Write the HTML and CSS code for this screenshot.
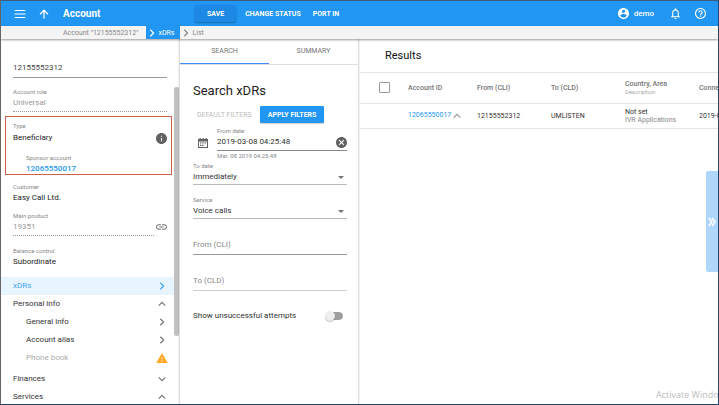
FILE: index.html
```html
<!DOCTYPE html>
<html lang="en">
<head>
<meta charset="utf-8">
<meta name="viewport" content="width=device-width, initial-scale=1">
<title>Account – xDRs</title>
<link rel="stylesheet" href="styles.css">
</head>
<body>
<svg class="sprite" aria-hidden="true">
  <symbol id="chevron" viewBox="0 0 8 8"><path d="M2.3 .8 5.6 4 2.3 7.2" fill="none" stroke="currentColor" stroke-width="1.2"/></symbol>
</svg>
<div class="app">
  <header class="topbar">
    <div class="topbar-nav">
      <button class="icon-button" aria-label="Menu"><svg class="icon-menu" viewBox="0 0 12 10"><path d="M0.500 1.500h11M.5 5h11M.5 8.500h11" stroke="currentColor" stroke-width="1.200"/></svg></button>
      <button class="icon-button" aria-label="Up"><svg class="icon-up" viewBox="0 0 10 10"><path d="M5 9.500V1.200M1 5.200l4-4 4 4" fill="none" stroke="currentColor" stroke-width="1.300"/></svg></button>
      <h1 class="title">Account</h1>
    </div>
    <div class="topbar-actions">
      <button class="action save">SAVE</button>
      <button class="action">CHANGE STATUS</button>
      <button class="action">PORT IN</button>
    </div>
    <div class="topbar-user">
      <button class="user"><svg class="icon-round" viewBox="2 2 20 20"><path fill="currentColor" d="M12 2C6.480 2 2 6.480 2 12s4.480 10 10 10 10-4.480 10-10S17.520 2 12 2zm0 3c1.660 0 3 1.340 3 3s-1.340 3-3 3-3-1.340-3-3 1.340-3 3-3zm0 14.200c-2.500 0-4.710-1.280-6-3.220.03-1.990 4-3.080 6-3.080 1.990 0 5.970 1.090 6 3.080-1.290 1.940-3.500 3.220-6 3.220z"/></svg>demo</button>
      <button class="icon-button" aria-label="Notifications"><svg class="icon-bell" viewBox="4 2 16 20"><path fill="currentColor" d="M12 22c1.100 0 2-.9 2-2h-4c0 1.100.9 2 2 2zm6-6v-5c0-3.070-1.630-5.640-4.500-6.320V4c0-.83-.67-1.500-1.500-1.500s-1.500.67-1.500 1.500v.68C7.640 5.360 6 7.920 6 11v5l-2 2v1h16v-1l-2-2zm-2 1H8v-6c0-2.480 1.510-4.500 4-4.500s4 2.020 4 4.500v6z"/></svg></button>
      <button class="icon-button" aria-label="Help"><svg class="icon-round" viewBox="2 2 20 20"><path fill="currentColor" d="M11 18h2v-2h-2v2zm1-16C6.480 2 2 6.480 2 12s4.480 10 10 10 10-4.480 10-10S17.520 2 12 2zm0 18c-4.410 0-8-3.590-8-8s3.590-8 8-8 8 3.590 8 8-3.590 8-8 8zm0-14c-2.210 0-4 1.790-4 4h2c0-1.100.9-2 2-2s2 .9 2 2c0 2-3 1.750-3 5h2c0-2.250 3-2.500 3-5 0-2.210-1.790-4-4-4z"/></svg></button>
    </div>
  </header>

  <nav class="crumbs" aria-label="Breadcrumb">
    <a class="crumb first" href="#account">Account "12155552312"</a>
    <a class="crumb current" href="#xdrs"><svg class="crumb-arrow"><use href="#chevron"/></svg>xDRs</a>
    <a class="crumb" href="#list"><svg class="crumb-arrow"><use href="#chevron"/></svg>List</a>
  </nav>

  <main class="content">
    <aside class="sidebar">
      <div class="side-scroll">
        <div class="details">
          <input class="line-input account-id" aria-label="Account ID" value="12155552312">
          <div class="field dashed role">
            <label class="label" for="role">Account role</label>
            <input class="value muted" id="role" value="Universal" disabled>
          </div>
        </div>
        <section class="type-box">
          <div class="label">Type</div>
          <div class="type-row"><span>Beneficiary</span><svg class="icon-info" viewBox="2 2 20 20"><path fill="currentColor" d="M12 2C6.480 2 2 6.480 2 12s4.480 10 10 10 10-4.480 10-10S17.520 2 12 2zm1 15h-2v-6h2v6zm0-8h-2V7h2v2z"/></svg></div>
          <div class="sponsor">
            <div class="label">Sponsor account</div>
            <a class="link" href="#sponsor">12065550017</a>
          </div>
        </section>
        <div class="details after">
          <div class="field"><div class="label">Customer</div><div class="value">Easy Call Ltd.</div></div>
          <div class="product">
            <div class="field dashed">
              <label class="label" for="product">Main product</label>
              <input class="value muted" id="product" value="19351" disabled>
            </div>
            <svg class="icon-link" viewBox="2 7 20 10"><path fill="currentColor" d="M3.900 12c0-1.710 1.390-3.100 3.100-3.100h4V7H7c-2.760 0-5 2.240-5 5s2.240 5 5 5h4v-1.900H7c-1.710 0-3.100-1.390-3.100-3.100zM8 13h8v-2H8v2zm9-6h-4v1.900h4c1.710 0 3.100 1.390 3.100 3.100s-1.390 3.100-3.100 3.100h-4V17h4c2.760 0 5-2.240 5-5s-2.240-5-5-5z"/></svg>
          </div>
          <div class="field"><div class="label">Balance control</div><div class="value">Subordinate</div></div>
        </div>
        <nav class="menu" aria-label="Account sections">
          <a class="item active" href="#xdrs">xDRs<svg class="chev"><use href="#chevron"/></svg></a>
          <a class="item" href="#personal">Personal info<svg class="chev up"><use href="#chevron"/></svg></a>
          <a class="item sub" href="#general">General info<svg class="chev"><use href="#chevron"/></svg></a>
          <a class="item sub" href="#alias">Account alias<svg class="chev"><use href="#chevron"/></svg></a>
          <a class="item sub off" href="#phone">Phone book<svg class="icon-warn" viewBox="1 2 22 19"><path fill="#ffa726" d="M1 21h22L12 2 1 21z"/><path fill="#fff3e0" d="M13 18h-2v-2h2v2zm0-4h-2v-4h2v4z"/></svg></a>
          <a class="item group" href="#finances">Finances<svg class="chev down"><use href="#chevron"/></svg></a>
          <a class="item" href="#services">Services<svg class="chev up"><use href="#chevron"/></svg></a>
        </nav>
      </div>
      <div class="scrollbar"><div class="thumb"></div></div>
    </aside>

    <section class="search">
      <div class="tabs" role="tablist">
        <button class="tab selected" role="tab" aria-selected="true">SEARCH</button>
        <button class="tab" role="tab" aria-selected="false">SUMMARY</button>
      </div>
      <form class="filters">
        <h2 class="heading">Search xDRs</h2>
        <div class="buttons">
          <button class="flat" type="button" disabled>DEFAULT FILTERS</button>
          <button class="raised" type="button">APPLY FILTERS</button>
        </div>
        <div class="date">
          <svg class="icon-cal" viewBox="0 0 10 10"><path fill="currentColor" fill-rule="evenodd" d="M0 1h1.500V0h1.200v1h1.800V0h1.200v1h1.800V0h1.200v1H10v9H0zM1 3.500v5.500h8V3.500zM2 4.300h1.300v1.200H2zM4.200 4.300h1.400v1.200H4.200zM6.600 4.300H8v1.200H6.600zM2 6.700h1.300v1.300H2zM4.200 6.700h1.400v1.300H4.200z"/></svg>
          <div class="date-field">
            <label class="label" for="from-date">From date</label>
            <div class="date-line">
              <input class="value" id="from-date" value="2019-03-08 04:25:48">
              <button class="clear" type="button" aria-label="Clear date"><svg class="icon-clear" viewBox="2 2 20 20"><path fill="currentColor" d="M12 2C6.470 2 2 6.470 2 12s4.470 10 10 10 10-4.470 10-10S17.530 2 12 2zm5 13.590L15.590 17 12 13.410 8.410 17 7 15.590 10.590 12 7 8.410 8.410 7 12 10.590 15.590 7 17 8.410 13.410 12 17 15.590z"/></svg></button>
            </div>
            <div class="label hint">Mar. 08 2019 04:25:48</div>
          </div>
        </div>
        <div class="select-field">
          <label class="label" for="to-date">To date</label>
          <div class="select-line"><select class="value" id="to-date"><option>Immediately</option></select></div>
        </div>
        <div class="select-field service">
          <label class="label" for="service">Service</label>
          <div class="select-line"><select class="value" id="service"><option>Voice calls</option></select></div>
        </div>
        <input class="line-input blank" aria-label="From (CLI)" placeholder="From (CLI)">
        <input class="line-input blank pale" aria-label="To (CLD)" placeholder="To (CLD)">
        <label class="switch-row">Show unsuccessful attempts<input class="switch" type="checkbox" role="switch"></label>
      </form>
    </section>

    <section class="results">
      <h2 class="results-title">Results</h2>
      <table class="table">
        <colgroup><col class="c-check"><col class="c-id"><col class="c-std"><col class="c-std"><col class="c-std"><col class="c-time"></colgroup>
        <thead>
          <tr>
            <th><input class="check" type="checkbox" aria-label="Select all"></th>
            <th>Account ID</th><th>From (CLI)</th><th>To (CLD)</th>
            <th>Country, Area<div class="note">Description</div></th><th>Connect time</th>
          </tr>
        </thead>
        <tbody>
          <tr>
            <td></td>
            <td><a class="id-link" href="#account">12065550017</a><svg class="chev up small"><use href="#chevron"/></svg></td>
            <td>12155552312</td><td>UMLISTEN</td>
            <td>Not set<div class="note row-note">IVR Applications</div></td><td>2019-03-08</td>
          </tr>
        </tbody>
      </table>
    </section>
  </main>
  <button class="drawer" aria-label="Expand panel"><svg class="icon-double" viewBox="0 0 8 10"><path d="M.8 1l3 4-3 4M4 1l3 4-3 4" fill="none" stroke="#fff" stroke-width="1.500"/></svg></button>
  <div class="watermark">Activate Windows</div>
</div>
</body>
</html>
```

FILE: styles.css
```css
* { box-sizing: border-box; }
body { margin: 0; font-family: Roboto, "Liberation Sans", sans-serif; font-size: 8px; line-height: 10px; color: #222; background: #fff; }
h1, h2 { margin: 0; font-weight: 500; }
a { color: inherit; text-decoration: none; }
button, input, select { font: inherit; color: inherit; margin: 0; padding: 0; border: 0; background: none; border-radius: 0; }
input, select { outline: 0; min-width: 0; }
svg { display: block; flex: none; }
.sprite { position: absolute; width: 0; height: 0; }

.app { position: relative; display: flex; flex-direction: column; height: 100vh; overflow: hidden; border: 1px solid #1f4668; border-top-color: #3f5a78; border-left-color: #666; }

.topbar { display: flex; flex: none; align-items: center; height: 25px; background: #2196f3; color: #fff; }
.topbar-nav { display: flex; align-items: center; gap: 13px; width: 194px; padding-left: 13px; }
.icon-menu { width: 12px; height: 10px; }
.icon-up { width: 10px; height: 10px; }
.title { padding-left: 1px; font-size: 10px; font-weight: 700; line-height: 14px; }
.topbar-actions { display: flex; align-items: center; font-size: 7px; font-weight: 700; }
.action { padding: 0 6px; height: 17px; }
.save { padding: 0 12px; margin-right: 3px; background: #1e88e5; border-radius: 2px; box-shadow: 0 1px 2px rgba(0, 0, 0, .3); }
.topbar-user { display: flex; align-items: center; gap: 15px; margin-left: auto; padding-right: 12px; }
.user { display: flex; align-items: center; gap: 5px; margin-right: 2px; font-weight: 500; }
.icon-round { width: 11px; height: 11px; }
.icon-bell { width: 9px; height: 11px; }

.crumbs { display: flex; flex: none; position: relative; z-index: 1; height: 13px; padding-left: 62px; background: #f4f4f4; color: #888; font-size: 7px; box-shadow: 0 1px 2px rgba(0, 0, 0, .4); }
.crumb { display: flex; align-items: center; gap: 2px; padding: 0 6px 0 2px; }
.crumb.first { padding: 0 8px 0 0; }
.crumb.current { background: #2196f3; color: #fff; }
.crumb-arrow { width: 8px; height: 8px; }

.content { display: grid; grid-template-columns: 178px 180px minmax(0, 1fr); flex: 1; min-height: 0; }
.label { display: block; font-size: 6px; line-height: 8px; color: #888; }
.value { display: block; width: 100%; height: 10px; }
.muted { color: #999; }
.line-input { display: block; width: 100%; height: 16px; padding-bottom: 4px; border-bottom: 1px solid #999; }

.sidebar { display: flex; min-height: 0; overflow: hidden; }
.side-scroll { flex: 1; min-width: 0; }
.details { padding: 23px 7px 0 12px; }
.account-id { color: #444; }
.field { display: grid; gap: 2px; }
.dashed { padding-bottom: 3px; border-bottom: 1px dotted #999; }
.role { margin-top: 10px; }
.type-box { margin: 4px 2px 0 4px; padding: 5px 4px 0 7px; border: 1px solid #d5604a; }
.type-row { display: flex; align-items: center; justify-content: space-between; height: 12px; margin-top: 2px; }
.icon-info { width: 11px; height: 11px; color: #616161; }
.sponsor { display: grid; gap: 2px; margin-top: 10px; padding-left: 13px; }
.link { color: #2196f3; font-weight: 500; }
.details.after { display: grid; gap: 9px; padding-top: 8px; }
.product { display: grid; grid-template-columns: 1fr 11px; gap: 2px; align-items: center; margin-bottom: 2px; }
.icon-link { width: 11px; height: 6px; margin-top: 6px; color: #757575; }
.menu { margin-top: 10px; color: #333; }
.item { display: flex; align-items: center; justify-content: space-between; height: 18px; padding: 0 6px 0 12px; }
.item.sub { padding-left: 25px; }
.item.active { background: #e8f4fe; color: #42a5f5; }
.item.off { color: #aaa; }
.item.group { margin-top: 3px; }
.chev { width: 8px; height: 8px; margin-right: 2px; color: #757575; }
.active .chev { color: #42a5f5; }
.up { transform: rotate(-90deg); }
.down { transform: rotate(90deg); }
.icon-warn { width: 12px; height: 10px; }
.scrollbar { width: 5px; padding-top: 48px; }
.thumb { height: 249px; background: #c1c1c1; border-radius: 2px; }

.search { min-width: 0; border-left: 1px solid #ddd; border-right: 1px solid #ddd; box-shadow: 0 0 2px rgba(0, 0, 0, .15); overflow: hidden; }
.tabs { display: grid; grid-template-columns: 1fr 1fr; height: 26px; border-bottom: 1px solid #ddd; font-size: 7px; color: #757575; }
.tab { border-bottom: 1px solid transparent; }
.tab.selected { border-color: #448aff; }
.filters { padding: 18px 11px 0 13px; color: #333; }
.heading { font-size: 13px; font-weight: 400; line-height: 16px; color: #222; }
.buttons { display: flex; align-items: center; gap: 8px; margin-top: 7px; padding-left: 4px; font-size: 7px; }
.flat { color: #bbb; }
.raised { height: 17px; padding: 0 8px; background: #2196f3; color: #fff; font-weight: 700; border-radius: 1px; box-shadow: 0 1px 1px rgba(0, 0, 0, .2); }
.date { display: flex; gap: 9px; padding-left: 5px; margin-top: 4px; }
.icon-cal { width: 10px; height: 10px; margin-top: 11px; color: #616161; }
.date-field { flex: 1; min-width: 0; }
.date-line { display: flex; align-items: center; height: 16px; padding-bottom: 1px; border-bottom: 1px solid #888; }
.icon-clear { width: 11px; height: 11px; color: #616161; }
.hint { margin-top: 1px; }
.select-field { display: grid; gap: 2px; margin-top: 2px; }
.service { margin-top: 11px; }
.select-line { display: flex; align-items: center; height: 13px; padding-bottom: 2px; border-bottom: 1px solid #bbb; }
.select-line::after { content: ""; margin-right: 3px; border: 3px solid transparent; border-top-color: #757575; border-bottom: 0; }
select { appearance: none; }
.blank { margin-top: 20px; border-color: #999; }
.blank::placeholder { color: #888; opacity: 1; }
.blank.pale { border-color: #ccc; }
.switch-row { display: flex; align-items: center; justify-content: space-between; margin-top: 20px; padding-right: 4px; }
.switch { appearance: none; display: flex; align-items: center; width: 18px; height: 8px; border-left: 2px solid transparent; border-radius: 4px; background: #9e9e9e; background-clip: padding-box; }
.switch::before { content: ""; width: 10px; height: 10px; flex: none; margin-left: -2px; border-radius: 50%; background: #eee; box-shadow: 0 1px 1px rgba(0, 0, 0, .25); }

.results { min-width: 0; overflow: hidden; }
.results-title { height: 34px; padding-left: 26px; font-size: 11px; font-weight: 400; line-height: 34px; color: #111; border-bottom: 1px solid #e5e5e5; }
.table { table-layout: fixed; width: 420px; min-width: 100%; border-collapse: collapse; font-size: 7px; line-height: 8px; text-align: left; white-space: nowrap; }
.c-check { width: 49px; }
.c-id { width: 69px; }
.c-std { width: 74px; }
th, td { padding: 0; border-bottom: 1px solid #e5e5e5; }
th { height: 30px; color: #757575; font-weight: 500; }
td { height: 25px; color: #333; }
.check { display: block; appearance: none; width: 11px; height: 11px; margin-left: 20px; border: 1px solid #999; border-radius: 1px; }
.note { font-size: 6px; font-weight: 400; color: #aaa; }
.row-note { font-size: 7px; color: #888; }
.id-link { color: #2196f3; }
.small { display: inline-block; vertical-align: middle; margin-left: 2px; color: #999; }

.drawer { position: absolute; right: 0; top: 170px; display: grid; place-items: center; width: 12px; height: 101px; background: #aed7fb; border-radius: 2px 0 0 2px; }
.icon-double { width: 8px; height: 10px; }
.watermark { position: absolute; left: 655px; top: 388px; white-space: nowrap; font-family: "Open Sans", sans-serif; font-size: 9px; line-height: 12px; color: #bbb; }
```
